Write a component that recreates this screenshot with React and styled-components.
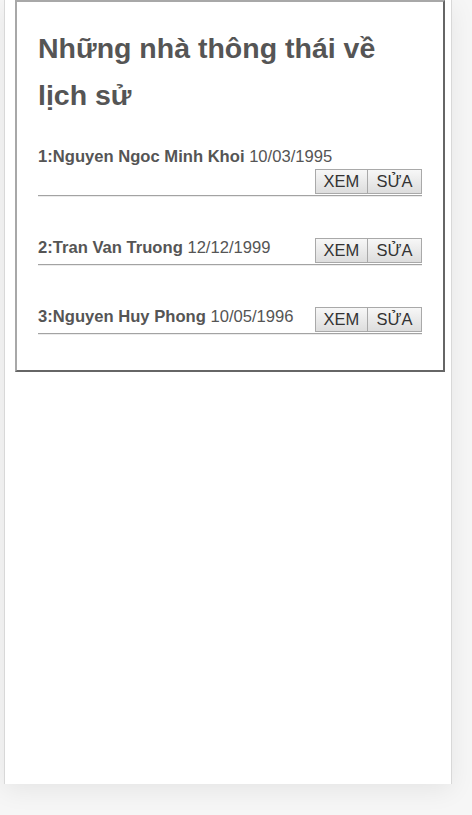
import * as React from "react";
import styled, { createGlobalStyle } from "styled-components";

const GlobalStyle = createGlobalStyle`
  html, body {
    margin: 0;
    padding: 0;
    background: #f6f6f6;
    font-family: "Liberation Sans", Arial, sans-serif;
  }
`;

const people = [
  { id: 1, name: "Nguyen Ngoc Minh Khoi", birthday: "10/03/1995" },
  { id: 2, name: "Tran Van Truong", birthday: "12/12/1999" },
  { id: 3, name: "Nguyen Huy Phong", birthday: "10/05/1996" },
];

const App = () => {
  return (
    <>
      <GlobalStyle />
      <Page>
        <Panel>
          <Card>
            <Title>Những nhà thông thái về lịch sử</Title>
            <List>
              {people.map((p) => (
                <Item key={p.id}>
                  <Row>
                    <Info>
                      <Name>
                        {p.id}:{p.name}
                      </Name>{" "}
                      {p.birthday}
                    </Info>
                    <Actions>
                      <ActionButton type="button">XEM</ActionButton>
                      <ActionButton type="button" $joined>
                        SỬA
                      </ActionButton>
                    </Actions>
                  </Row>
                  <Divider />
                </Item>
              ))}
            </List>
          </Card>
        </Panel>
      </Page>
    </>
  );
};

const Page = styled.div`
  min-height: 815px;
  padding-left: 4px;
  background: #f6f6f6;
`;

const Panel = styled.div`
  width: 430px;
  min-height: 784px;
  padding: 0 6px 0 10px;
  background: #fff;
  border-left: 1px solid #d8d8d8;
  border-right: 1px solid #d8d8d8;
  box-shadow: 0 6px 24px rgba(0, 0, 0, 0.07);
`;

const Card = styled.div`
  width: 384px;
  padding: 0 21px 35px;
  border-style: solid;
  border-width: 2px;
  border-color: #a8a8a8 #666 #666 #a8a8a8;
  background: #fff;
`;

const Title = styled.h1`
  margin: 23px 0 28px;
  font-size: 28.5px;
  line-height: 47px;
  font-weight: bold;
  color: #555;
`;

const List = styled.div`
  display: flex;
  flex-direction: column;
  gap: 41px;
`;

const Item = styled.div``;

const Row = styled.div`
  display: flex;
  flex-wrap: wrap;
  align-items: flex-start;
  row-gap: 2px;
`;

const Info = styled.div`
  font-size: 16.6px;
  line-height: 20px;
  color: #555;
`;

const Name = styled.b`
  font-weight: bold;
`;

const Actions = styled.div`
  display: flex;
  margin-left: auto;
`;

const ActionButton = styled.button`
  width: ${(p) => (p.$joined ? "54px" : "53px")};
  height: 25px;
  padding: 0;
  margin: 0;
  font-family: "Liberation Sans", Arial, sans-serif;
  font-size: 16.5px;
  color: #333;
  background: linear-gradient(to bottom, #f7f7f7, #dddddd);
  border: 1px solid #a9a9a9;
  border-left: ${(p) => (p.$joined ? "none" : "1px solid #a9a9a9")};
  border-radius: 0;
  cursor: pointer;
`;

const Divider = styled.hr`
  margin: 1px 0 0;
  height: 0;
  border: none;
  border-top: 1px solid #a3a3a3;
  border-bottom: 1px solid #ececec;
`;

export default App;
